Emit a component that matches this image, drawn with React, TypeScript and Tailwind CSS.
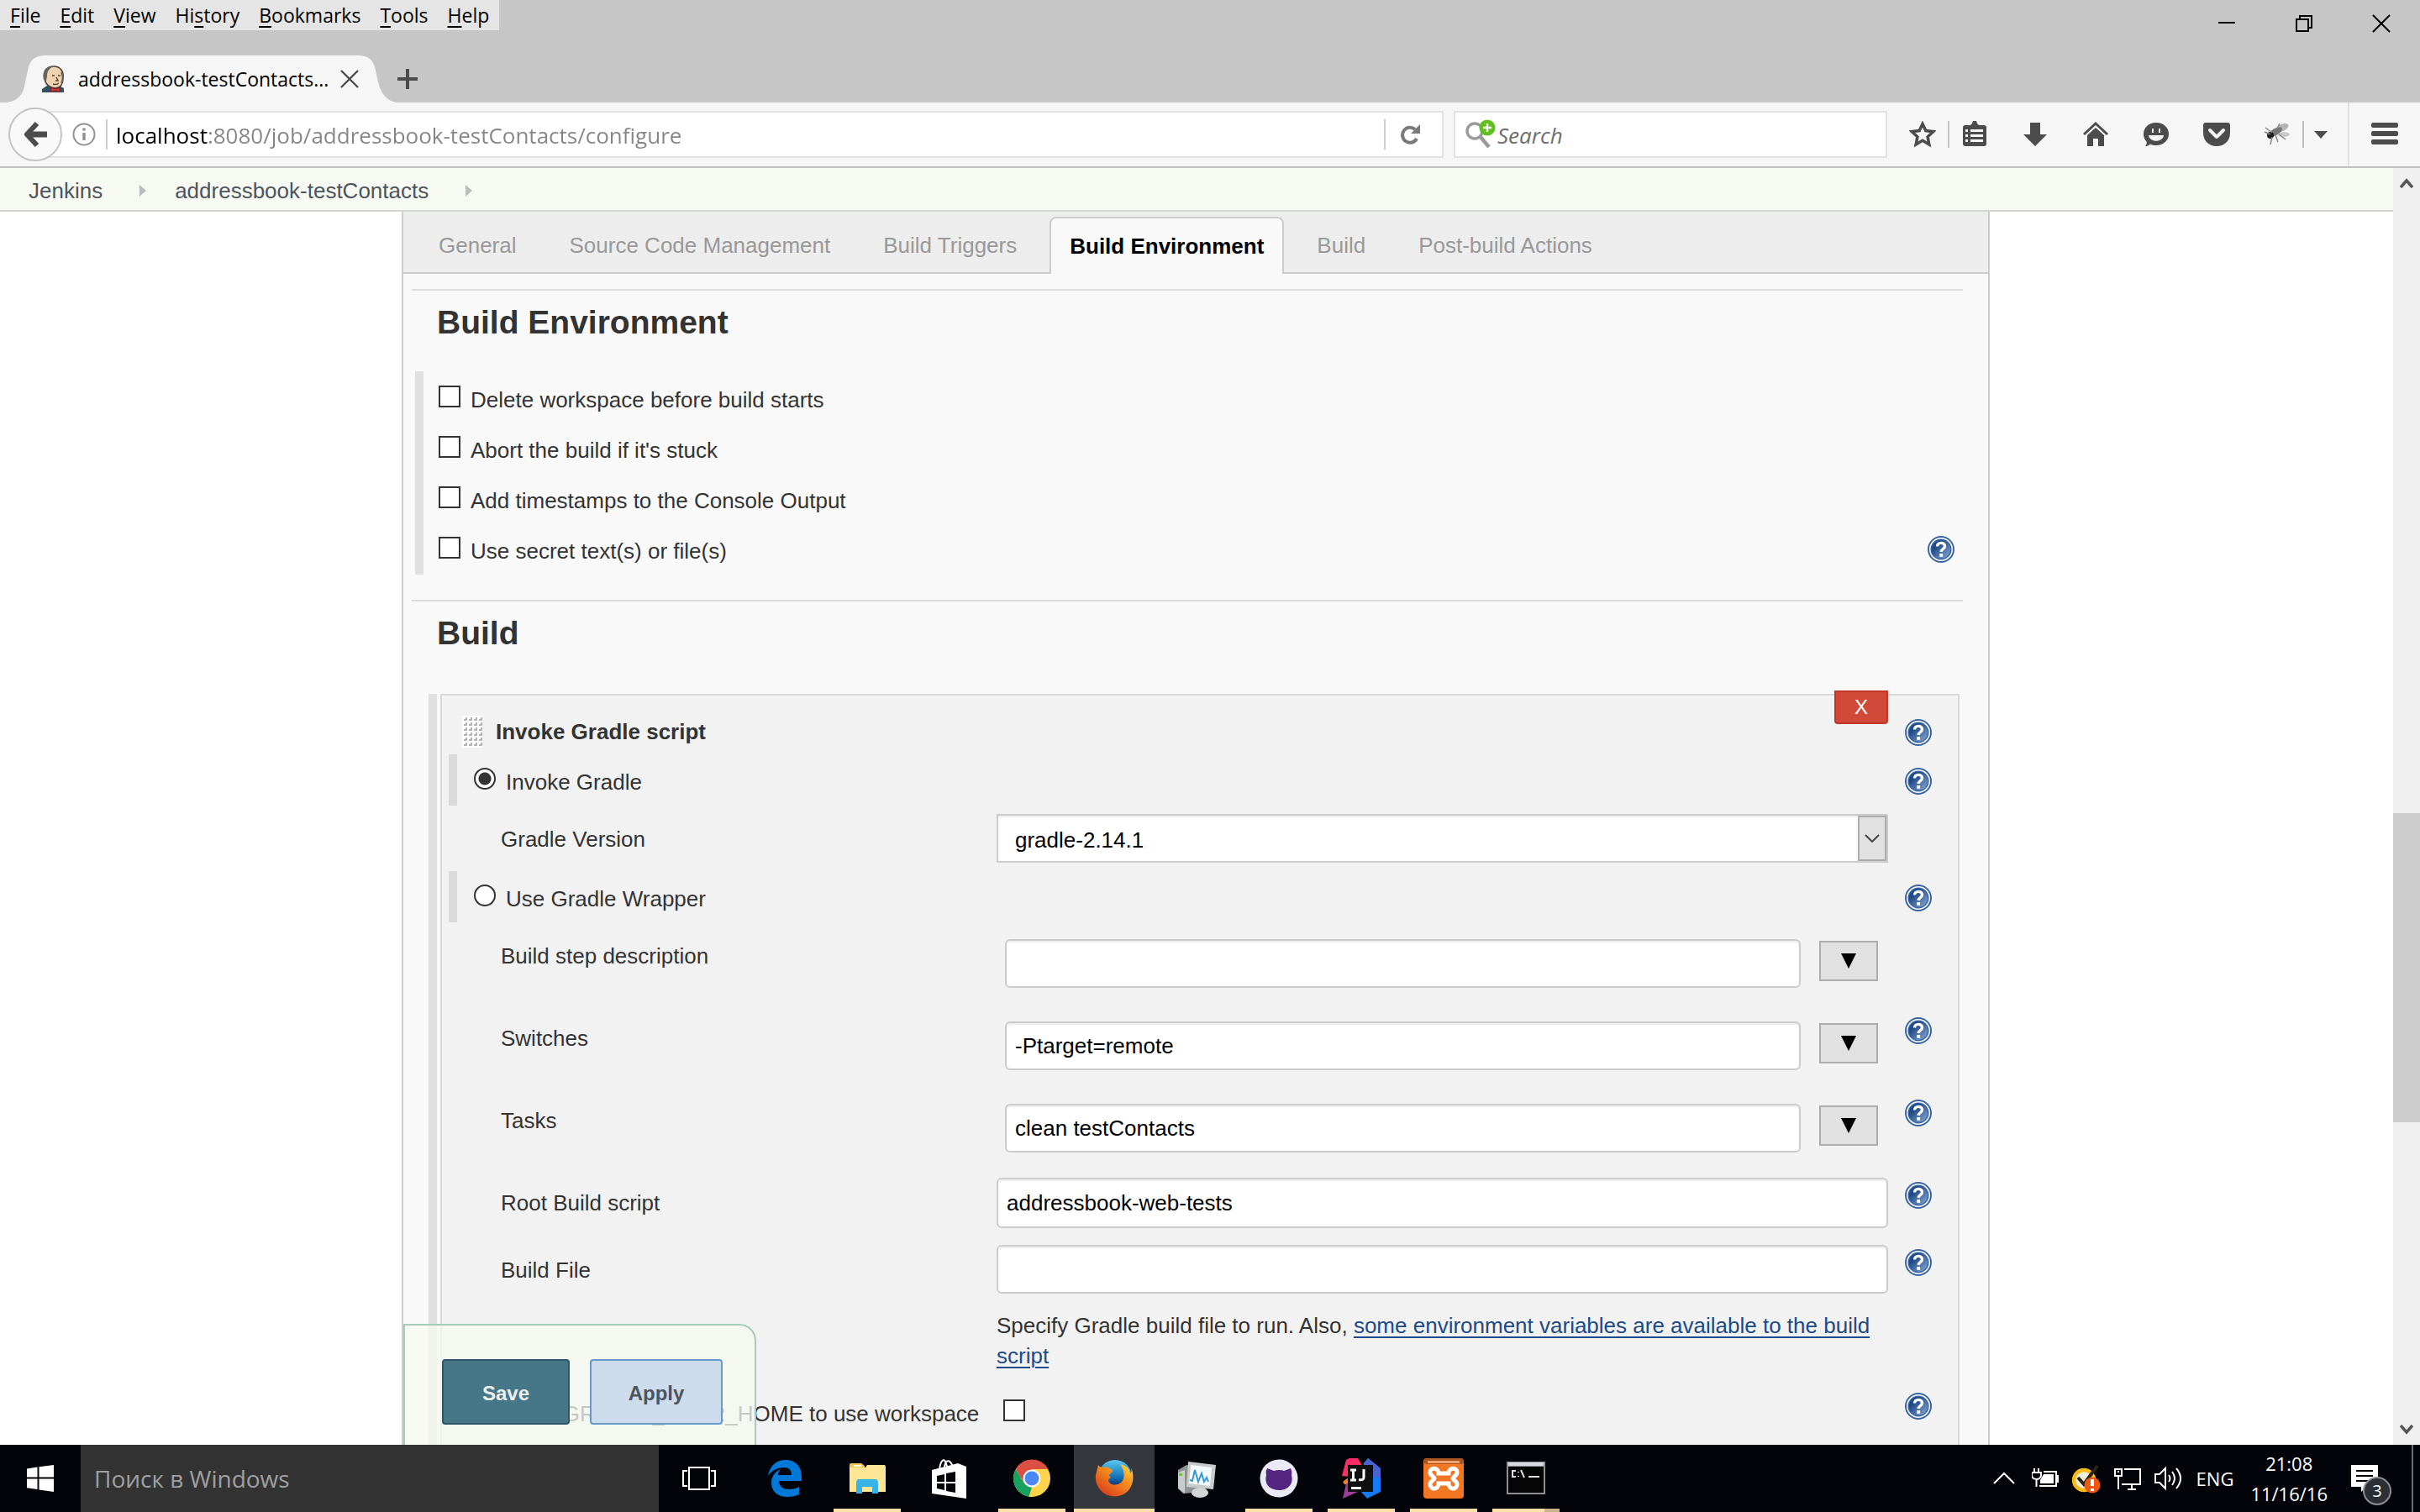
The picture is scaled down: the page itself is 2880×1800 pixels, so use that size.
import React from "react";

const ui = "font-['Open_Sans','Noto_Sans',sans-serif]";

/* ---------- Browser chrome ---------- */

const menus: [string, string, string][] = [
  ["", "F", "ile"],
  ["", "E", "dit"],
  ["", "V", "iew"],
  ["Hi", "s", "tory"],
  ["", "B", "ookmarks"],
  ["", "T", "ools"],
  ["", "H", "elp"],
];

function JenkinsFace() {
  return (
    <svg viewBox="0 0 28 32" className="h-8 w-7 shrink-0" aria-hidden="true">
      <path d="M1 32v-4l6-4h14l6 3v5z" fill="#335061" />
      <path d="M4 15C2 6 7 1 15 1s12 6 11 14c0 7-3 12-9 12S6 23 5 19z" fill="#edd3b0" stroke="#4b3f37" strokeWidth="1.6" />
      <path d="M3 17C1 8 5 1 14 1 8 5 7 8 7 13l-1 5z" fill="#6a625c" />
      <path d="M24 8c2 4 2 9 0 13" stroke="#6a625c" strokeWidth="2" fill="none" />
      <path d="M13 12h3M20 12h3M18 14l2 4h-3M14 22c3 1 5 1 7-1" stroke="#5a4437" strokeWidth="1.5" fill="none" />
      <path d="M12 26l5 2 5-2v6l-5-2-5 2z" fill="#d33833" stroke="#7c1d1d" />
    </svg>
  );
}

function TitleBar() {
  return (
    <header className="flex h-[122px] shrink-0 items-start justify-between bg-[#c6c6c6] text-black">
      <div className="flex h-full flex-col items-start justify-between">
        <nav className="flex h-9 items-center gap-[23px] bg-[#e5e5e5] px-3 text-[23px] leading-7" aria-label="Application menu">
          {menus.map(([a, b, c]) => (
            <button key={a + b + c} type="button">
              {a}
              <span className="underline underline-offset-4">{b}</span>
              {c}
            </button>
          ))}
        </nav>
        <div className="flex h-14 items-center">
          <div className="relative ml-2 flex h-full w-[464px] items-center">
            <svg viewBox="0 0 464 56" preserveAspectRatio="none" className="absolute inset-0 h-full w-full" aria-hidden="true">
              <path d="M0 56C14 54 20 46 22 32L25 18C27 6 33 0 46 0H418C431 0 437 6 439 18L442 32C446 46 452 54 464 56Z" fill="#f6f6f6" />
            </svg>
            <div className="relative flex w-full items-center pl-[41px]">
              <JenkinsFace />
              <span className="ml-4 w-[300px] whitespace-nowrap text-[23px] leading-8">addressbook-testContacts...</span>
              <button type="button" aria-label="Close tab" className="ml-3">
                <svg viewBox="0 0 22 22" className="h-[22px] w-[22px]" stroke="#4c4c4c" strokeWidth="2.4">
                  <path d="M1 1L21 21M21 1L1 21" />
                </svg>
              </button>
            </div>
          </div>
          <button type="button" aria-label="New tab">
            <svg viewBox="0 0 26 26" className="h-[26px] w-[26px]" stroke="#4c4c4c" strokeWidth="4">
              <path d="M13 1V25M1 13H25" />
            </svg>
          </button>
        </div>
      </div>
      <div className="flex gap-[70px] pr-[35px] pt-[17px]">
        <button type="button" aria-label="Minimize">
          <svg viewBox="0 0 22 22" className="h-[22px] w-[22px]">
            <path d="M1 10H21" stroke="#000" strokeWidth="2" />
          </svg>
        </button>
        <button type="button" aria-label="Restore">
          <svg viewBox="0 0 22 22" className="h-[22px] w-[22px]" fill="none" stroke="#000" strokeWidth="2">
            <path d="M2 6H16V20H2ZM6 6V2H20V16H16" />
          </svg>
        </button>
        <button type="button" aria-label="Close">
          <svg viewBox="0 0 22 22" className="h-[22px] w-[22px]" stroke="#000" strokeWidth="2">
            <path d="M1 1L21 21M21 1L1 21" />
          </svg>
        </button>
      </div>
    </header>
  );
}

function ToolIcon({ label, children }: { label: string; children: React.ReactNode }) {
  return (
    <button type="button" aria-label={label} className="shrink-0">
      <svg viewBox="0 0 32 32" className="h-8 w-8" fill="#4c4c4c">
        {children}
      </svg>
    </button>
  );
}

function Toolbar() {
  return (
    <div className="flex h-[78px] shrink-0 items-center border-b-2 border-[#c1c1c1] bg-[#f6f6f6] pr-[26px]">
      <button type="button" aria-label="Back" className="relative z-10 ml-[10px] flex h-16 w-16 shrink-0 items-center justify-center rounded-full border-2 border-[#c4c4c4] bg-[#f9f9f9]">
        <svg viewBox="0 0 30 30" className="h-[30px] w-[30px]" fill="none" stroke="#4c4c4c" strokeWidth="6" strokeLinejoin="round">
          <path d="M17 2L5 15L17 28" />
          <path d="M6 15H29" strokeWidth="7" />
        </svg>
      </button>
      <div className="-ml-8 flex h-14 flex-1 items-center border-2 border-[#e2e2e2] bg-white pl-[42px]">
        <svg viewBox="0 0 28 28" className="h-7 w-7 shrink-0" fill="none" stroke="#909090" strokeWidth="2" aria-hidden="true">
          <circle cx="14" cy="14" r="12.5" />
          <path d="M14 12V21M14 6.500V9.500" strokeWidth="3.400" />
        </svg>
        <div className="ml-3 h-9 w-[2px] bg-[#cfcfcf]" />
        <input
          type="text"
          aria-label="Address"
          defaultValue="localhost:8080/job/addressbook-testContacts/configure"
          className="ml-[10px] h-10 min-w-0 flex-1 bg-[linear-gradient(90deg,#000_109px,#858585_109px)] bg-clip-text pt-[2px] text-[26px] text-transparent outline-none"
        />
        <div className="h-9 w-[2px] bg-[#cfcfcf]" />
        <button type="button" aria-label="Reload" className="ml-[17px] mr-[24px]">
          <svg viewBox="0 0 26 26" className="h-[26px] w-[26px]" fill="none" stroke="#7a7a7a" strokeWidth="4">
            <path d="M20 18A9 9 0 1 1 18 7" />
            <path d="M24 1V12H13Z" fill="#7a7a7a" stroke="none" />
          </svg>
        </button>
      </div>
      <div className="ml-3 flex h-14 w-[516px] shrink-0 items-center border-2 border-[#e2e2e2] bg-white pl-3">
        <svg viewBox="0 0 36 36" className="h-9 w-9 shrink-0" aria-hidden="true">
          <circle cx="11" cy="14" r="9" fill="none" stroke="#9b9b9b" strokeWidth="3.500" />
          <path d="M17 20L28 33" stroke="#9b9b9b" strokeWidth="4.500" />
          <circle cx="26" cy="10" r="9.500" fill="#5fc11e" />
          <path d="M26 5V15M21 10H31" stroke="#fff" strokeWidth="2.400" />
        </svg>
        <input type="text" aria-label="Search" placeholder="Search" className="ml-[2px] min-w-0 flex-1 pt-[2px] text-[26px] italic outline-none placeholder:text-[#6f6f6f]" />
      </div>
      <div className="ml-[26px] flex shrink-0 items-center gap-[40px]">
        <div className="-mr-[26px] flex items-center gap-[14px]">
          <ToolIcon label="Bookmark this page">
            <path d="M16 3.500L19.800 11.600L28.600 12.700L22.100 18.800L23.800 28L16 23.200L8.200 28L9.900 18.800L3.400 12.700L12.200 11.600Z" fill="none" stroke="#4c4c4c" strokeWidth="3.500" />
          </ToolIcon>
          <div className="h-8 w-[2px] bg-[#c4c4c4]" />
        </div>
        <ToolIcon label="Bookmarks list">
          <path fillRule="evenodd" d="M5 5H11L13 3L14 0H18L19 3L21 5H27Q30 5 30 8V27Q30 30 27 30H5Q2 30 2 27V8Q2 5 5 5ZM5 10V13H8V10ZM11 10V13H26V10ZM5 16V19H8V16ZM11 16V19H26V16ZM5 22V25H8V22ZM11 22V25H26V22Z" />
        </ToolIcon>
        <ToolIcon label="Downloads">
          <path d="M10 2H22V16H30L16 30L2 16H10Z" />
        </ToolIcon>
        <ToolIcon label="Home">
          <path d="M16 1L31 15L29 17L16 5L3 17L1 15Z" />
          <path d="M16 8L26 17V30H19V21H13V30H6V17Z" />
        </ToolIcon>
        <ToolIcon label="Chat">
          <path fillRule="evenodd" d="M16 2C25 2 31 8 31 15.500S25 29 16 29C13 29 11 28.600 9 27.500C7 29.500 5 30 3 30C5 28 5 26 4.500 24.500C2 22 1 19 1 15.500C1 8 7 2 16 2ZM11 9V14H13V9ZM19 9V14H21V9ZM7 17C8 26 24 26 25 17Z" />
        </ToolIcon>
        <ToolIcon label="Pocket">
          <path d="M3 2H29Q32 2 32 5V14C32 24 25 30 16 30S0 24 0 14V5Q0 2 3 2Z" />
          <path d="M8 11L16 19L24 11" fill="none" stroke="#f6f6f6" strokeWidth="4" strokeLinecap="round" strokeLinejoin="round" />
        </ToolIcon>
        <ToolIcon label="Firebug">
          <ellipse cx="22" cy="8" rx="8" ry="4" fill="#b4b4b4" transform="rotate(-25 22 8)" />
          <ellipse cx="24" cy="16" rx="7" ry="3" fill="#c9c9c9" />
          <ellipse cx="14" cy="13" rx="9" ry="4" fill="#777" transform="rotate(-30 14 13)" />
          <circle cx="8" cy="17" r="4" fill="#1c1c1c" />
          <path d="M2 8L10 14M1 13L8 16M10 19L8 28M14 17L17 25M18 16L26 22M16 9L19 3" stroke="#888" strokeWidth="1.500" />
        </ToolIcon>
      </div>
      <div className="ml-[14px] h-8 w-[2px] bg-[#bdbdbd]" />
      <button type="button" aria-label="More extensions" className="ml-3">
        <svg viewBox="0 0 16 9" className="h-[9px] w-4">
          <path d="M0 0H16L8 9Z" fill="#4c4c4c" />
        </svg>
      </button>
      <div className="ml-6 h-full w-[2px] bg-[#e0e0e0]" />
      <button type="button" aria-label="Open menu" className="ml-[26px]">
        <svg viewBox="0 0 32 32" className="h-8 w-8" fill="#4c4c4c">
          <rect y="2" width="32" height="6" rx="2" />
          <rect y="12" width="32" height="6" rx="2" />
          <rect y="22" width="32" height="6" rx="2" />
        </svg>
      </button>
    </div>
  );
}

/* ---------- Jenkins page ---------- */

function Crumb({ children }: { children: string }) {
  return (
    <li className="flex items-center">
      <a href="#">{children}</a>
      <svg viewBox="0 0 8 14" className="ml-11 mr-[34px] h-3.5 w-2" aria-hidden="true">
        <path d="M0 0L8 7L0 14Z" fill="#bcbcbc" />
      </svg>
    </li>
  );
}

function Help({ className = "" }: { className?: string }) {
  return (
    <button type="button" aria-label="Help" className={"h-8 w-8 shrink-0 " + className}>
      <svg viewBox="0 0 32 32" className="h-8 w-8">
        <defs>
          <linearGradient id="helpFill" x1="0" y1="0" x2="1" y2="1">
            <stop offset="0.3" stopColor="#204a87" />
            <stop offset="1" stopColor="#8fb0dc" />
          </linearGradient>
        </defs>
        <circle cx="16" cy="16" r="15" fill="#fff" stroke="#3a65a5" strokeWidth="2" />
        <circle cx="16" cy="16" r="11.800" fill="url(#helpFill)" stroke="#3a65a5" strokeWidth="1.500" />
        <path d="M11.500 12.500C11.500 7 20.500 7 20.500 12.200C20.500 15.500 16.200 15.500 16.200 19" fill="none" stroke="#fff" strokeWidth="3.400" />
        <rect x="14.300" y="21" width="3.800" height="3.800" fill="#fff" />
      </svg>
    </button>
  );
}

const box = "h-[26px] w-[26px] shrink-0 appearance-none border-2 border-[#333] bg-white";

function Check({ label, help }: { label: string; help?: boolean }) {
  return (
    <div className="flex h-[60px] items-start justify-between">
      <label className="flex items-baseline gap-3 pt-[17px] leading-[30px]">
        <input type="checkbox" className={box} />
        {label}
      </label>
      {help && <Help className="mt-4" />}
    </div>
  );
}

function Radio({ label, checked }: { label: string; checked?: boolean }) {
  return (
    <div className="flex h-[61px] items-start justify-between pl-2 pr-[31px]">
      <label className="flex h-full items-baseline gap-3 border-l-[10px] border-[#dadada] pl-5 pt-4 leading-[30px]">
        <input
          type="radio"
          name="gradle"
          defaultChecked={checked}
          className="h-[26px] w-[26px] shrink-0 appearance-none rounded-full border-2 border-[#333] bg-white checked:bg-[radial-gradient(circle,#333_7px,#fff_8px)]"
        />
        {label}
      </label>
      <Help className="mt-4" />
    </div>
  );
}

const field = "min-w-0 flex-1 rounded-[6px] border-2 border-[#ccc] bg-white px-[10px] text-black shadow-[inset_0_2px_2px_rgba(0,0,0,0.08)] outline-none";

function Row({ id, label, help, tall, children }: { id: string; label: string; help?: boolean; tall?: boolean; children: React.ReactNode }) {
  return (
    <div className="flex items-start pl-[70px] pr-[31px]">
      <label htmlFor={id} className="w-[590px] shrink-0 pt-[25px] leading-[30px]">
        {label}
      </label>
      <div className={"flex min-w-0 flex-1 " + (tall ? "py-5" : "py-[10px]")}>{children}</div>
      <div className="ml-5 w-8 shrink-0">{help && <Help className="mt-[15px]" />}</div>
    </div>
  );
}

function ExpandableField({ id, value }: { id: string; value: string }) {
  return (
    <div className="flex min-w-0 flex-1 pl-[10px] pr-3">
      <input id={id} type="text" defaultValue={value} className={field + " h-[58px]"} />
      <button type="button" aria-label="Expand" className="ml-[22px] mt-[2px] flex h-12 w-[70px] shrink-0 items-center justify-center border-2 border-[#adadad] bg-[#e1e1e1]">
        <svg viewBox="0 0 18 18" className="h-[18px] w-[18px]">
          <path d="M0 0H18L9 18Z" />
        </svg>
      </button>
    </div>
  );
}

function DragHandle() {
  return (
    <svg viewBox="0 0 24 38" className="h-[38px] w-6 shrink-0" aria-hidden="true">
      <defs>
        <pattern id="grip" width="6" height="6" patternUnits="userSpaceOnUse">
          <path d="M2 5H5V2" fill="none" stroke="#b4b4b4" strokeWidth="2" />
        </pattern>
      </defs>
      <rect width="24" height="38" fill="#fff" />
      <rect width="24" height="37" fill="url(#grip)" />
    </svg>
  );
}

const tabs = ["General", "Source Code Management", "Build Triggers", "Build Environment", "Build", "Post-build Actions"];

function Section({ title, children }: { title: string; children: React.ReactNode }) {
  return (
    <section>
      <div className="ml-[10px] mr-[30px] border-t-2 border-[#ddd]" />
      <h2 className="pb-[2px] pl-10 pt-4 text-[39px] font-bold leading-[44px]">{title}</h2>
      {children}
    </section>
  );
}

function ConfigForm() {
  return (
    <form className="relative ml-[478px] mr-[480px] flex-1 border-x-2 border-[#ccc] bg-[#f9f9f9] text-[26px] text-[#333]">
      <div className="flex h-[74px] items-end gap-[19px] border-b-2 border-[#ccc] bg-[#ededed] pl-5">
        {tabs.map((t) =>
          t === "Build Environment" ? (
            <button key={t} type="button" className="-mx-[2px] -mb-[2px] h-[68px] rounded-t-lg border-2 border-b-0 border-[#ccc] bg-[#f9f9f9] px-[22px] font-bold text-black">
              {t}
            </button>
          ) : (
            <button key={t} type="button" className="h-16 px-[22px] text-[#999]">
              {t}
            </button>
          )
        )}
      </div>
      <div className="pt-[18px]">
        <Section title="Build Environment">
          <div className="ml-[14px] mr-10 mt-[34px] h-[242px] border-l-[10px] border-[#e0e0e0] pl-[18px]">
            <Check label="Delete workspace before build starts" />
            <Check label="Abort the build if it's stuck" />
            <Check label="Add timestamps to the Console Output" />
            <Check label="Use secret text(s) or file(s)" help />
          </div>
        </Section>
        <div className="h-[30px]" />
        <Section title="Build">
          <div className="ml-[30px] mr-[34px] mt-12 border-l-[10px] border-[#e0e0e0] pl-1">
            <div className="border-2 border-[#d9d9d9] bg-[#f2f2f2] pb-16">
              <div className="relative flex h-[70px] items-start pl-6 pr-[31px]">
                <div className="mt-[22px] flex flex-1 items-center gap-4 font-bold leading-[42px]">
                  <DragHandle />
                  Invoke Gradle script
                </div>
                <button type="button" className="absolute right-[83px] top-[-6px] h-10 w-16 rounded-b-[4px] border-2 border-[#c13828] bg-[#d24939] text-[24px] leading-9 text-white">
                  X
                </button>
                <Help className="mt-7" />
              </div>
              <Radio label="Invoke Gradle" checked />
              <Row id="version" label="Gradle Version">
                <div className="relative flex flex-1">
                  <select id="version" className="h-[58px] flex-1 appearance-none border-2 border-[#ccc] bg-white pl-5 pt-1 text-black shadow-[inset_0_2px_2px_rgba(0,0,0,0.08)] outline-none">
                    <option>gradle-2.14.1</option>
                  </select>
                  <span className="pointer-events-none absolute inset-y-[2px] right-[2px] flex w-[34px] items-center justify-center border-2 border-[#adadad] bg-[#e1e1e1]">
                    <svg viewBox="0 0 18 10" className="h-[10px] w-[18px]" fill="none" stroke="#444" strokeWidth="2">
                      <path d="M1 1L9 9L17 1" />
                    </svg>
                  </span>
                </div>
              </Row>
              <Radio label="Use Gradle Wrapper" />
              <Row id="description" label="Build step description" tall>
                <ExpandableField id="description" value="" />
              </Row>
              <Row id="switches" label="Switches" tall help>
                <ExpandableField id="switches" value="-Ptarget=remote" />
              </Row>
              <Row id="tasks" label="Tasks" tall help>
                <ExpandableField id="tasks" value="clean testContacts" />
              </Row>
              <Row id="root-script" label="Root Build script" help>
                <input id="root-script" type="text" defaultValue="addressbook-web-tests" className={field + " h-[60px]"} />
              </Row>
              <Row id="build-file" label="Build File" help>
                <input id="build-file" type="text" defaultValue="" className={field + " h-[58px]"} />
              </Row>
              <p className="ml-[660px] mr-[83px] pb-[18px] pt-[10px] leading-9">
                Specify Gradle build file to run. Also,{" "}
                <a href="#" className="text-[#204a87] underline decoration-2 underline-offset-4">
                  some environment variables are available to the build script
                </a>
              </p>
              <div className="flex items-start pl-[70px] pr-[31px]">
                <label htmlFor="gradle-home" className="w-[598px] shrink-0 whitespace-nowrap pt-[18px] leading-[30px]">
                  Force GRADLE_USER_HOME to use workspace
                </label>
                <div className="flex flex-1 pt-4">
                  <input id="gradle-home" type="checkbox" className={box} />
                </div>
                <Help className="mt-2" />
              </div>
            </div>
          </div>
        </Section>
      </div>
    </form>
  );
}

function JenkinsPage() {
  return (
    <div className="flex min-h-0 flex-1">
      <div className="relative flex min-w-0 flex-1 flex-col overflow-hidden bg-white font-['Liberation_Sans',Arial,sans-serif]">
        <nav aria-label="Breadcrumb" className="h-[52px] shrink-0 border-b-2 border-[#d3d6cf] bg-[#f6faf2] text-[26px] text-[#4d545d]">
          <ol className="flex h-[54px] items-center pl-[34px]">
            <Crumb>Jenkins</Crumb>
            <Crumb>addressbook-testContacts</Crumb>
          </ol>
        </nav>
        <div className="flex min-h-0 flex-1 overflow-hidden">
          <ConfigForm />
        </div>
        <div className="absolute bottom-0 left-[480px] flex h-36 w-[420px] gap-6 rounded-tr-[20px] border-2 border-b-0 border-[#a8cbb9] bg-[#f5faef]/75 pl-11 pt-10 text-[24px] font-bold">
          <button type="button" className="h-[78px] w-[152px] rounded-[4px] border-2 border-[#2f5566] bg-[#457788] pt-1 text-[#eee]">
            Save
          </button>
          <button type="button" className="h-[78px] w-[158px] rounded-[4px] border-2 border-[#6699cc] bg-[#ccdcec] pt-1 text-[#4d545d]">
            Apply
          </button>
        </div>
      </div>
      <div className="flex w-8 shrink-0 flex-col items-center bg-[#f0f0f0] py-3" aria-hidden="true">
        <svg viewBox="0 0 16 12" className="h-3 w-4" fill="none" stroke="#555" strokeWidth="3.500">
          <path d="M1 11L8 3L15 11" />
        </svg>
        <div className="flex-[744]" />
        <div className="w-full flex-[368] bg-[#cdcdcd]" />
        <div className="flex-[360]" />
        <svg viewBox="0 0 16 12" className="h-3 w-4" fill="none" stroke="#555" strokeWidth="3.500">
          <path d="M1 1L8 9L15 1" />
        </svg>
      </div>
    </div>
  );
}

/* ---------- Windows taskbar ---------- */

function Task({ label, state = "", children }: { label: string; state?: "" | "open" | "active" | "multi"; children: React.ReactNode }) {
  return (
    <button
      type="button"
      aria-label={label}
      className={"flex h-20 w-24 shrink-0 flex-col items-center justify-between " + (state === "active" ? "bg-[#34373b]" : "")}
    >
      <svg viewBox="0 0 48 48" className="mt-4 h-12 w-12">
        {children}
      </svg>
      {state === "multi" ? (
        <span className="flex h-1 w-20">
          <span className="flex-1 bg-[#fce0a8]" />
          <span className="w-[18px] bg-[#c9b48a]" />
        </span>
      ) : (
        <span className={"h-1 " + (state === "active" ? "w-full bg-[#fce0a8]" : state === "open" ? "w-20 bg-[#fce0a8]" : "w-20")} />
      )}
    </button>
  );
}

function Tasks() {
  return (
    <div className="flex gap-[2px]">
      <button type="button" aria-label="Task view" className="flex h-20 w-[100px] items-center justify-center pr-1">
        <svg viewBox="0 0 42 30" className="h-[30px] w-[42px]" fill="none" stroke="#fff" strokeWidth="2">
          <path d="M9 2H33V28H9ZM7 6H2V24H7M35 6H40V24H35" />
        </svg>
      </button>
      <Task label="Edge">
        <path
          fill="#0078d7"
          d="M4 21C6 9 14 2 25 2C37 2 44 10 44 22V27H17C17 34 23 37 29 37C34 37 38 36 41 34V43C37 45 32 46 27 46C15 46 8 39 8 29C8 22 12 16 19 13C17 15 16 18 16 20H32C32 14 29 11 23 11C15 11 8 15 4 21Z"
        />
      </Task>
      <Task label="File Explorer" state="open">
        <path d="M3 8Q3 6 5 6H17L21 9V13H3Z" fill="#f7c843" />
        <rect x="8" y="8" width="9" height="2" fill="#fff" />
        <path d="M3 11H22L24 8H44Q46 8 46 10V40H3Z" fill="#ffe694" />
        <path d="M11 42V29Q11 25 14 25H34Q37 25 37 29V42H30V34H18V42Z" fill="#36b4ea" />
      </Task>
      <Task label="Store">
        <path d="M12 14C13 3 17 0 19 4L22 12M18 12C18 4 23 -1 27 8L28 11" fill="none" stroke="#fff" strokeWidth="2" />
        <path d="M3 14L34 6L44 10V48L3 42Z" fill="#fff" />
        <path d="M9 21L18 19V28H9ZM20 18L31 16V28H20ZM9 30H18V38L9 36ZM20 30H31V41L20 39Z" fill="#02040a" />
      </Task>
      <Task label="Chrome" state="open">
        <circle cx="24" cy="24" r="22" fill="#fdd44b" />
        <path d="M24 13H43.500A22 22 0 0 0 4.900 13L14.500 29Z" fill="#dd4f43" />
        <path d="M4.900 13L14.500 29.500L24 35L20.500 45.700A22 22 0 0 1 4.900 13Z" fill="#18a15f" />
        <path d="M33.500 29.500L24 46A22 22 0 0 1 20.500 45.700L26 34Z" fill="#fdd44b" />
        <circle cx="24" cy="24" r="10.500" fill="#fff" />
        <circle cx="24" cy="24" r="8.500" fill="#4a88f3" />
      </Task>
      <Task label="Firefox" state="active">
        <defs>
          <linearGradient id="globe" x1="0" y1="0" x2="0" y2="1">
            <stop offset="0" stopColor="#5cc8f2" />
            <stop offset="0.55" stopColor="#0f6cb4" />
            <stop offset="0.8" stopColor="#1b2560" />
          </linearGradient>
          <linearGradient id="fox" x1="1" y1="0" x2="0.2" y2="1">
            <stop offset="0" stopColor="#ffe14a" />
            <stop offset="0.4" stopColor="#f7941e" />
            <stop offset="1" stopColor="#d9391c" />
          </linearGradient>
        </defs>
        <circle cx="25" cy="22" r="20" fill="url(#globe)" />
        <path
          fill="url(#fox)"
          d="M5 8C6 10 8 11 11 11C15 9 18 12 22 14C22 17 19 18 18 20C18 22 20 22 20 23C15 25 17 29 21 31C28 33 34 29 35 24C37 18 34 11 31 7C40 9 43 14 43 18C45 17 45 14 44 11C48 20 47 30 42 37C36 45 24 48 14 43C5 38 1 29 2 20C3 17 4 12 5 8Z"
        />
      </Task>
      <Task label="Task Manager">
        <path d="M2 14L12 8L36 12L34 40L8 42L2 36Z" fill="#8e9293" />
        <path d="M2 17L10 14V42L2 36Z" fill="#c9cccb" />
        <rect x="3" y="18" width="4" height="3" fill="#73c82c" />
        <ellipse cx="28" cy="41" rx="10" ry="6" fill="#d4d6d6" />
        <path d="M14 4L47 8L44 37L12 34Z" fill="#c9cbca" />
        <path d="M17 8L42 11L40 33L15 30Z" fill="#f3f8fb" />
        <path d="M16 26L19 27L22 14L26 28L30 18L33 28L36 23L38 28" fill="none" stroke="#3a97d0" strokeWidth="2" />
      </Task>
      <Task label="GitHub" state="open">
        <circle cx="24" cy="24" r="22.500" fill="#e9eaf5" />
        <path d="M10 12L18 15Q24 13 30 15L38 12Q40 16 39 20C42 32 34 38 24 38S6 32 9 20Q8 16 10 12Z" fill="#55267f" />
      </Task>
      <Task label="IntelliJ IDEA" state="open">
        <path d="M6 2L10 0H20L27 12L10 22L1 21Z" fill="#fc2d65" />
        <path d="M2 28L10 22V32L4 31Z" fill="#f58220" />
        <path d="M2 48L6 30H28L20 40Z" fill="#9b3f96" />
        <path d="M27 6L32 0L47 12V40L31 48L22 38Z" fill="#157bf5" />
        <path d="M27 6L32 0L47 12V24L30 20Z" fill="#4a63cf" />
        <rect x="8" y="8" width="30" height="32" fill="#101010" />
        <path d="M11 14H18M14.500 14V26M11 26H18M27 13V23Q27 26.500 21 25.500" fill="none" stroke="#fff" strokeWidth="3" />
        <rect x="12" y="34" width="12" height="3" fill="#fff" />
      </Task>
      <Task label="XAMPP" state="open">
        <rect x="0" y="0" width="48" height="48" rx="4" fill="#f37623" />
        <rect x="0" y="0" width="48" height="7" rx="4" fill="#a8541f" />
        <rect x="5" y="3" width="38" height="3" fill="#f0a06c" />
        <path
          d="M18 18H30C30 10 41 11 40 17C40 21 36 21 35 24C36 27 40 27 40 31C40 38 30 38 30 30H18C18 38 8 38 8 31C8 27 12 27 13 24C12 21 8 21 8 17C7 11 18 10 18 18Z"
          fill="none"
          stroke="#fff"
          strokeWidth="5"
        />
      </Task>
      <Task label="Command Prompt" state="multi">
        <rect x="1" y="4" width="46" height="39" fill="#8c9093" />
        <rect x="3" y="5" width="42" height="4" fill="#d5dbe0" />
        <rect x="3" y="10" width="42" height="31" fill="#050505" />
        <path d="M12 15H8V22H12M15 16V17M15 21V22M18 14L22 23M27 22H40" fill="none" stroke="#ddd" strokeWidth="2" />
      </Task>
    </div>
  );
}

function Tray() {
  return (
    <div className="flex items-center text-white">
      <div className="flex items-center gap-4">
        <button type="button" aria-label="Show hidden icons" className="mr-1">
          <svg viewBox="0 0 26 16" className="h-4 w-[26px]" fill="none" stroke="#fff" strokeWidth="2">
            <path d="M1 14L13 2L25 14" />
          </svg>
        </button>
        <svg viewBox="0 0 32 32" className="h-8 w-8" role="img" aria-label="Battery">
          <path d="M3 4V9M8 4V9M0 9H11V13Q10 17 5.500 17Q1 17 0 13ZM5.500 17V26" fill="none" stroke="#fff" strokeWidth="2" />
          <path d="M14 8H29V25H9M29 13H31V20H29" fill="none" stroke="#fff" strokeWidth="2" />
          <path d="M14 11H26V22H10V18Z" fill="#fff" />
        </svg>
        <svg viewBox="0 0 34 36" className="h-9 w-[34px]" role="img" aria-label="Antivirus">
          <circle cx="14" cy="20" r="12" fill="#f5efe0" stroke="#f9bb17" strokeWidth="4.500" />
          <path d="M7 17L14 25L30 3" fill="none" stroke="#2b2416" strokeWidth="4" />
          <circle cx="24" cy="26" r="9.500" fill="#f1580f" />
          <path d="M24 19V27M24 30V33" stroke="#fff" strokeWidth="4" />
        </svg>
        <svg viewBox="0 0 32 32" className="h-8 w-8" fill="none" stroke="#fff" strokeWidth="2" role="img" aria-label="Network">
          <path d="M1 5H9V13H1ZM12 5H31V23H9M5 13V29M16 29H26M21 23V29M4 8H6" />
        </svg>
        <svg viewBox="0 0 34 32" className="h-8 w-[34px]" fill="none" stroke="#fff" strokeWidth="2" role="img" aria-label="Volume">
          <path d="M1 11H6L13 4V28L6 21H1ZM17 12Q20 16 17 20M21 8Q27 16 21 24M26 4Q36 16 26 28" />
        </svg>
      </div>
      <span className="ml-4 text-[22px] leading-8">ENG</span>
      <div className="ml-5 text-center text-[22px] leading-9">
        <div>21:08</div>
        <div>11/16/16</div>
      </div>
      <button type="button" aria-label="Notifications" className="relative ml-7 h-16 w-[50px]">
        <svg viewBox="0 0 50 64" className="h-16 w-[50px]">
          <path d="M0 16H32V42H18L12 48V42H0Z" fill="#fff" />
          <path d="M6 23H26M6 29H26M6 35H20" stroke="#02040a" strokeWidth="2" />
          <circle cx="31" cy="47" r="16" fill="#2c2f33" stroke="#8b8d90" strokeWidth="2" />
        </svg>
        <span className="absolute left-[15px] top-[31px] w-8 text-center text-[20px] leading-8">3</span>
      </button>
      <div className="ml-[22px] mr-2 h-20 w-[2px] bg-[#6b6b6b]" />
    </div>
  );
}

function Taskbar() {
  return (
    <footer className="flex h-20 shrink-0 items-center justify-between bg-[#02040a]">
      <div className="flex">
        <button type="button" aria-label="Start" className="flex h-20 w-24 items-center justify-center">
          <svg viewBox="0 0 32 32" className="h-8 w-8" fill="#fff">
            <path d="M0 4.500L12.500 2.600V14.500H0ZM14.500 2.300L32 0V14.500H14.500ZM0 16.500H12.500V29L0 27.300ZM14.500 16.500H32V32L14.500 29.400Z" />
          </svg>
        </button>
        <input type="text" aria-label="Поиск в Windows" placeholder="Поиск в Windows" className="h-20 w-[688px] bg-[#333] px-4 text-[28px] outline-none placeholder:text-[#a0a0a0]" />
        <Tasks />
      </div>
      <Tray />
    </footer>
  );
}

export default function App() {
  return (
    <div className={"flex h-screen w-full flex-col overflow-hidden " + ui}>
      <TitleBar />
      <Toolbar />
      <JenkinsPage />
      <Taskbar />
    </div>
  );
}
